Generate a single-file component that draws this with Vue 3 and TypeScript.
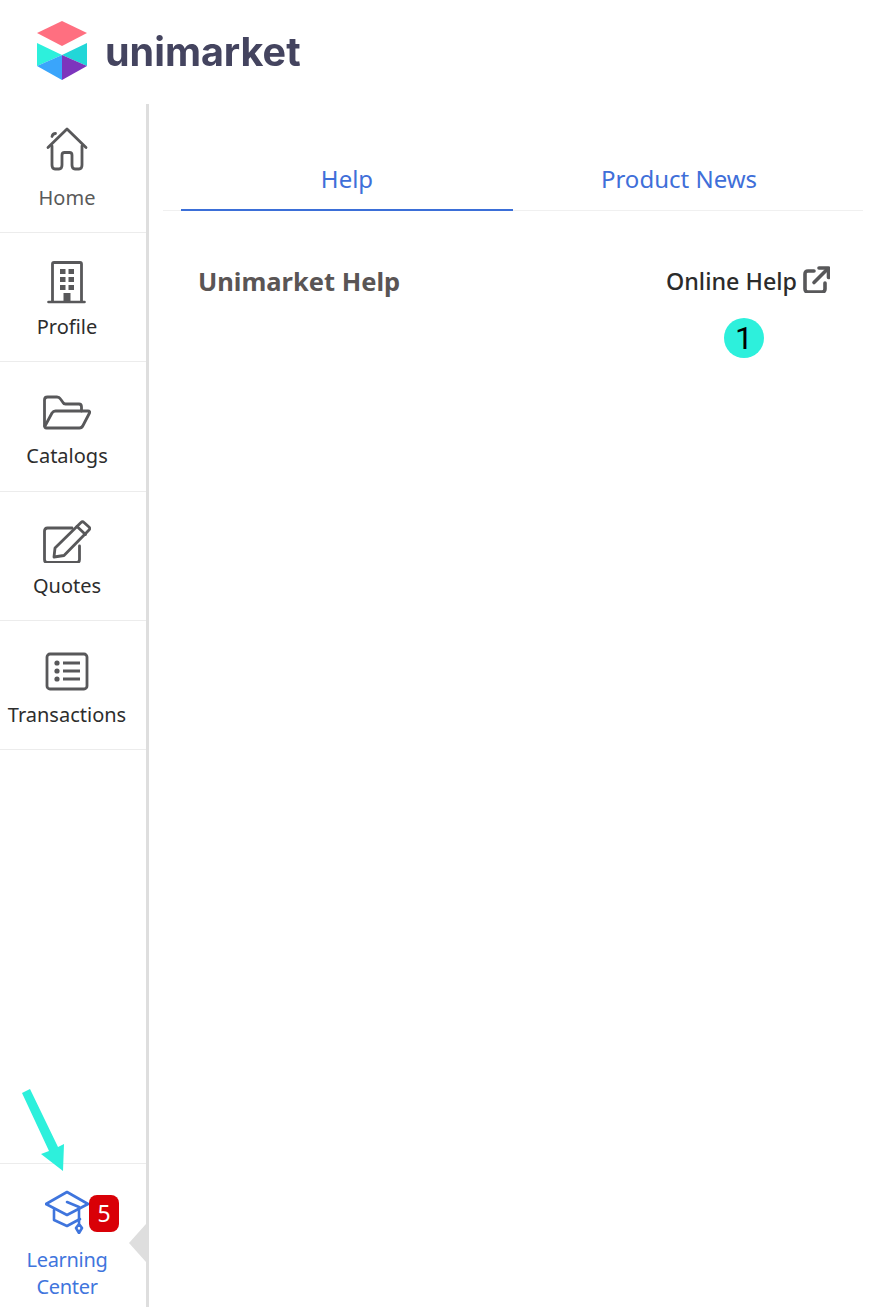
<script setup lang="ts">
const navItems = [
  { label: 'Home', icon: 'home' },
  { label: 'Profile', icon: 'profile' },
  { label: 'Catalogs', icon: 'catalogs' },
  { label: 'Quotes', icon: 'quotes' },
  { label: 'Transactions', icon: 'transactions' },
]
</script>

<template>
  <div class="page">
    <header class="header">
      <svg class="logo" width="50" height="60" viewBox="0 0 50 60">
        <polygon points="25,0 50,12 25,25 0,12" fill="#ff6f80" />
        <polygon points="0,22 25,34 0,45" fill="#2df0dc" />
        <polygon points="50,22 50,45 25,34" fill="#22d6d8" />
        <polygon points="25,34 25,59 0,45" fill="#3aa5fb" />
        <polygon points="25,34 50,45 25,59" fill="#7d35bd" />
      </svg>
      <span class="wordmark">unimarket</span>
    </header>
    <div class="body">
      <aside class="sidebar">
        <nav class="nav">
          <a v-for="item in navItems" :key="item.label" class="nav-item">
            <svg class="nav-icon" width="48" height="48" viewBox="0 0 48 48" fill="none" stroke="#58585a" stroke-width="2.800" stroke-linecap="round" stroke-linejoin="round">
              <template v-if="item.icon === 'home'">
                <path d="M5 20.500 L24 2 L43 20.500" />
                <path d="M9 9.500 C9.500 7.500 11 6.500 12.500 6.500" />
                <path d="M9 19 V38 C9 41 10 42 12 42 H16 C18 42 19 41 19 38 V28 C19 26 20 25.500 21.500 25.500 H26.500 C28 25.500 29 26 29 28 V38 C29 41 30 42 32 42 H36 C38 42 39 41 39 38 V19" />
              </template>
              <template v-else-if="item.icon === 'profile'">
                <path d="M9.500 45 V8 C9.500 7 10 6.500 11 6.500 H37 C38 6.500 38.500 7 38.500 8 V45" />
                <path d="M5.500 46 H41.500" stroke-width="2.600" />
                <g fill="#58585a" stroke="none">
                  <rect x="17" y="13" width="5.500" height="5" /><rect x="25.500" y="13" width="5.500" height="5" />
                  <rect x="17" y="21" width="5.500" height="5" /><rect x="25.500" y="21" width="5.500" height="5" />
                  <rect x="17" y="29" width="5.500" height="5" /><rect x="25.500" y="29" width="5.500" height="5" />
                  <rect x="20.500" y="37" width="7" height="9" />
                </g>
              </template>
              <template v-else-if="item.icon === 'catalogs'">
                <path d="M1.500 41 V15 C1.500 13 2.500 12 4.500 12 H14 C15.500 12 16.500 12.500 17.500 14 L20 17.500 C20.500 18.500 21 19 22.500 19 H36 C38 19 38.500 20 38.500 22 V26" />
                <path d="M3.500 43 C2 43 1.500 42 2 41 L9 28 C10 26.500 11 26 12.500 26 H45 C46.500 26 47 27 46.500 28 L40 40.500 C39 42.500 38 43 36.500 43 Z" />
              </template>
              <template v-else-if="item.icon === 'quotes'">
                <path d="M29 13 H4.500 C2.500 13 1.500 14 1.500 16 V44.500 C1.500 46.500 2.500 47.500 4.500 47.500 H33.500 C35.500 47.500 36.500 46.500 36.500 44.500 V31" />
                <path d="M12 33 L38 7.500 C39 6.500 40 6.500 41 7.500 L46 12 C47 13 47 14 46 15 L21 40.500 L11 42 Z" />
                <path d="M34 11.500 L42.500 19.500" />
              </template>
              <template v-else>
                <rect x="4" y="10" width="40" height="35" rx="3" />
                <g fill="#58585a" stroke="none">
                  <circle cx="14" cy="19" r="2.600" /><circle cx="14" cy="27" r="2.600" /><circle cx="14" cy="35" r="2.600" />
                </g>
                <path d="M20 19 H37 M20 27 H37 M20 35 H37" stroke-linecap="butt" />
              </template>
            </svg>
            <span class="nav-label">{{ item.label }}</span>
          </a>
        </nav>
        <a class="learning">
          <div class="learning-icon">
            <svg width="44" height="44" viewBox="0 0 44 44" fill="none" stroke="#3f75dd" stroke-width="2.600" stroke-linecap="round" stroke-linejoin="round">
              <path d="M22 2 L43 14 L22 25 L1 14 Z" />
              <path d="M22 12 L34 17 V33" />
              <path d="M9 20 V30 L22 36 L35 29" />
              <path d="M34 34 L37 38 L34 43 L31 38 Z" />
            </svg>
            <span class="count">5</span>
          </div>
          <span class="learning-label">Learning<br />Center</span>
        </a>
        <i class="caret"></i>
      </aside>
      <main class="main">
        <div class="tabs">
          <div class="tab tab-active">Help</div>
          <div class="tab">Product News</div>
        </div>
        <section class="help-row">
          <h2 class="help-title">Unimarket Help</h2>
          <a class="help-link">
            Online Help
            <svg width="27" height="27" viewBox="0 0 27 27" fill="none" stroke="#58585a" stroke-width="3.600" stroke-linecap="round" stroke-linejoin="round">
              <path d="M11 5 H5 C3 5 2 6 2 8 V23 C2 25 3 26 5 26 H19 C21 26 22 25 22 23 V17" />
              <path d="M11 16.500 L24 3.500" />
              <path d="M16 2 H25.500 V11.500" />
            </svg>
          </a>
        </section>
      </main>
    </div>
    <span class="marker">1</span>
    <svg class="arrow" width="48" height="88" viewBox="0 0 48 88">
      <polygon points="0,4 8,0 36,58 42,55 41,82 19,65 27,62" fill="#2df0dc" />
    </svg>
  </div>
</template>

<style>
html, body { margin: 0; background: #fff; }
</style>

<style scoped>
.page {
  position: relative;
  width: 871px;
  height: 1307px;
  overflow: hidden;
  background: #fff;
  font-family: "Noto Sans", "Open Sans", sans-serif;
  display: flex;
  flex-direction: column;
}
.header {
  height: 104px;
  flex: none;
  display: flex;
  align-items: center;
  gap: 18px;
  padding: 0 0 0 37px;
  box-sizing: border-box;
}
.logo { margin-top: -2px; }
.wordmark {
  font-family: Inter, sans-serif;
  font-weight: 700;
  font-size: 39.5px;
  line-height: 1;
  color: #44445f;
  filter: blur(0.4px);
  margin-top: 2px;
}
.body { flex: 1; display: flex; min-height: 0; }
.sidebar {
  position: relative;
  width: 149px;
  flex: none;
  box-sizing: border-box;
  border-right: 3px solid #dedede;
  display: flex;
  flex-direction: column;
  justify-content: space-between;
}
.nav { display: flex; flex-direction: column; }
.nav-item {
  height: 129.2px;
  box-sizing: border-box;
  border-bottom: 1px solid #ececec;
  display: flex;
  flex-direction: column;
  align-items: center;
  padding: 23px 12px 0 0;
  color: #2d2d2d;
}
.nav-icon { display: block; }
.nav-label { font-size: 20px; line-height: 28px; margin-top: 9px; white-space: nowrap; }
.nav-item:first-child .nav-label { color: #5a5a5a; }
.learning {
  height: 144px;
  box-sizing: border-box;
  border-top: 1px solid #ececec;
  display: flex;
  flex-direction: column;
  align-items: center;
  padding: 26px 12px 0 0;
  color: #3f75dd;
}
.learning-icon { position: relative; height: 44px; width: 44px; }
.count {
  position: absolute;
  left: 44px;
  top: 5px;
  width: 30px;
  height: 37px;
  border-radius: 8px;
  background: #d90007;
  color: #fff;
  font-size: 23px;
  line-height: 37px;
  text-align: center;
}
.learning-label { font-size: 20px; line-height: 27px; text-align: center; margin-top: 12px; letter-spacing: -0.3px; }
.caret {
  position: absolute;
  right: 0;
  bottom: 45px;
  width: 0;
  height: 0;
  border-top: 19px solid transparent;
  border-bottom: 19px solid transparent;
  border-right: 17px solid #dedede;
}
.main { flex: 1; min-width: 0; padding: 0 8px 0 14px; }
.tabs {
  display: flex;
  padding: 44px 18px 0;
  border-bottom: 1px solid #f0f0f0;
  height: 107px;
  box-sizing: border-box;
}
.tab {
  width: 332px;
  height: 63px;
  box-sizing: border-box;
  text-align: center;
  font-size: 24px;
  line-height: 61px;
  color: #3f6fd9;
}
.tab-active { border-bottom: 2px solid #3b6fd8; }
.help-row {
  display: flex;
  justify-content: space-between;
  align-items: center;
  padding: 50px 33px 0 35px;
}
.help-title {
  margin: 0;
  font-size: 25.5px;
  line-height: 40px;
  font-weight: 700;
  color: #5a5555;
}
.help-link {
  display: flex;
  align-items: center;
  gap: 6px;
  font-size: 23.3px;
  font-weight: 500;
  color: #2b2b2b;
}
.help-link svg { margin-top: -3px; }
.marker {
  position: absolute;
  left: 724px;
  top: 318px;
  width: 40px;
  height: 40px;
  border-radius: 50%;
  background: #2df0dc;
  color: #000;
  font-family: Roboto, sans-serif;
  font-size: 32px;
  line-height: 40px;
  text-align: center;
}
.arrow {
  position: absolute;
  left: 22px;
  top: 1089px;
}
</style>
